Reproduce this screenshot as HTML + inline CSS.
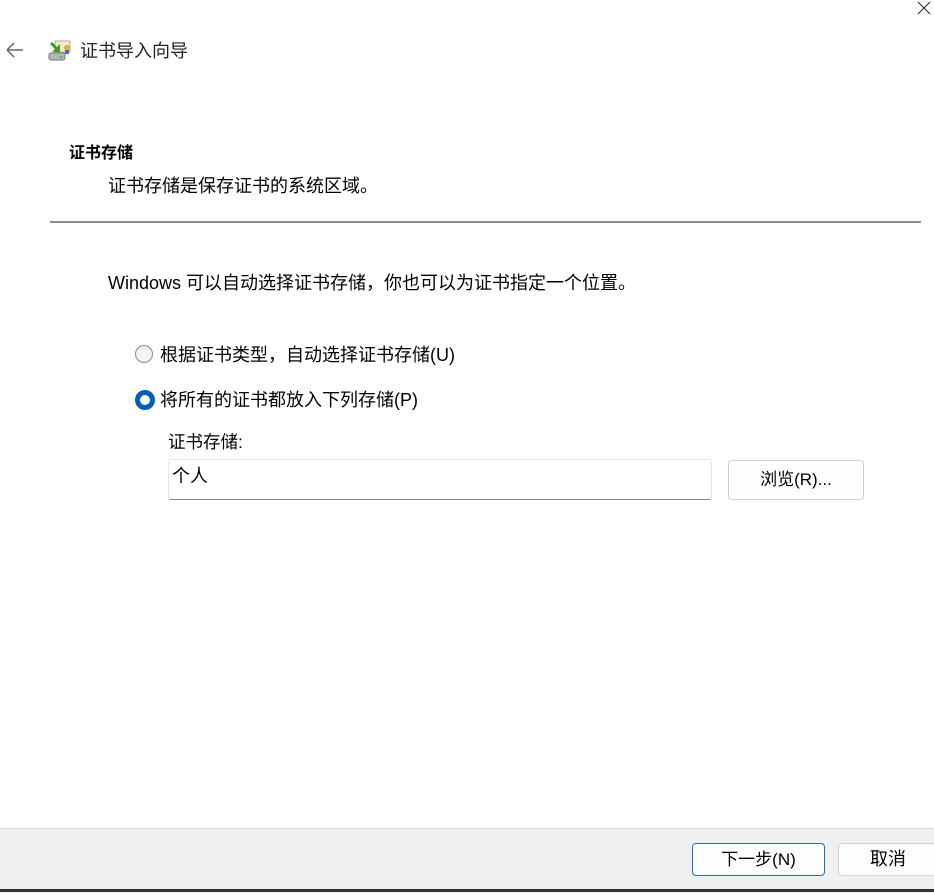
<!DOCTYPE html>
<html><head><meta charset="utf-8"><style>
body{margin:0;width:934px;height:892px;background:#fff;position:relative;overflow:hidden;font-family:"Liberation Sans","Noto Sans CJK SC",sans-serif;color:#000;font-size:16px}
.a{position:absolute;white-space:nowrap}
.btn{position:absolute;box-sizing:border-box;border:1px solid #d0d0d0;border-radius:4px;background:#fdfdfd;text-align:center;font-size:17px}
</style></head><body>
<svg class="a" style="left:916px;top:0" width="18" height="16"><path d="M2 2L14 14M14 2L2 14" stroke="#333" stroke-width="1.2"/></svg>
<svg class="a" style="left:5px;top:42px" width="20" height="16"><path d="M2 8H18M2 8L9 1M2 8L9 15" stroke="#666" stroke-width="1.5" fill="none"/></svg>
<svg class="a" style="left:48px;top:40px" width="24" height="22"><rect x="7" y="1" width="15" height="11" fill="#f3ead0" stroke="#b9a979"/><circle cx="19" cy="8" r="3" fill="#e7a93a"/><rect x="17" y="10" width="4" height="4" fill="#3a6fc2"/><path d="M4 2L9 7L12 4V12H4L7 9L2 4Z" fill="#3a9a2a"/><rect x="1" y="13" width="16" height="7" rx="2" fill="#b8b8b8" stroke="#777"/><rect x="11" y="16" width="4" height="2" fill="#5c5"/></svg>
<div class="a" style="left:80px;top:37px;font-size:18px;color:#222">证书导入向导</div>
<div class="a" style="left:69px;top:139px;font-size:16px;font-weight:bold">证书存储</div>
<div class="a" style="left:108px;top:172px;font-size:18px">证书存储是保存证书的系统区域。</div>
<div class="a" style="left:50px;top:221px;width:871px;height:2px;background:#8a8a8a"></div>
<div class="a" style="left:108px;top:269px;font-size:18px">Windows 可以自动选择证书存储，你也可以为证书指定一个位置。</div>
<div class="a" style="left:135px;top:345px;width:18px;height:18px;box-sizing:border-box;border:1px solid #888;border-radius:50%;background:#f3f3f3"></div>
<div class="a" style="left:160px;top:341px;font-size:18px">根据证书类型，自动选择证书存储(U)</div>
<div class="a" style="left:135px;top:390px;width:20px;height:20px;box-sizing:border-box;border:5px solid #005fb8;border-radius:50%;background:#fff"></div>
<div class="a" style="left:160px;top:386px;font-size:18px">将所有的证书都放入下列存储(P)</div>
<div class="a" style="left:168px;top:429px;font-size:17.5px">证书存储:</div>
<div class="a" style="left:168px;top:459px;width:544px;height:41px;box-sizing:border-box;border:1px solid #e5e5e5;border-bottom:1px solid #888;border-radius:3px"></div>
<div class="a" style="left:172px;top:462px;font-size:18px">个人</div>
<div class="btn" style="left:728px;top:460px;width:136px;height:40px;line-height:38px;font-size:17px">浏览(R)...</div>
<div class="a" style="left:0;top:828px;width:934px;height:64px;background:#f0f0f0;border-top:1px solid #ddd"></div>
<div class="a" style="left:0;top:889px;width:934px;height:3px;background:#333"></div>
<div class="btn" style="left:692px;top:843px;width:133px;height:33px;line-height:31px;border-color:#1a6fc4">下一步(N)</div>
<div class="btn" style="left:838px;top:843px;width:100px;height:33px;line-height:31px;font-size:18px">取消</div>
</body></html>
